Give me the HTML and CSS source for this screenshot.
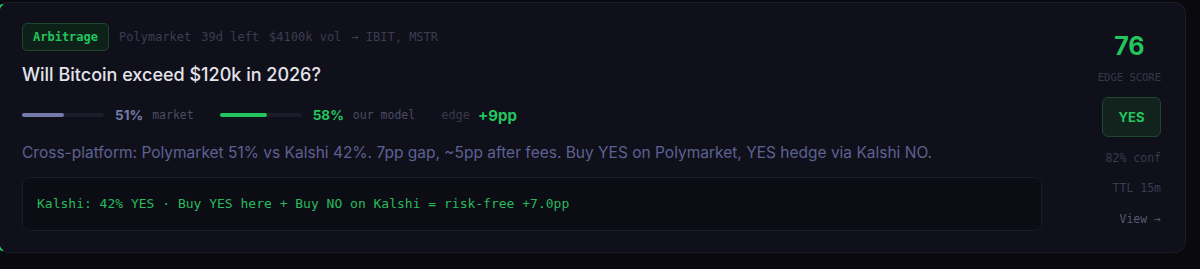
FILE: index.html
```html
<!DOCTYPE html>
<html lang="en">
<head>
  <meta charset="UTF-8">
  <meta name="viewport" content="width=device-width, initial-scale=1.0">
  <title>Edge Signal</title>
  <link rel="stylesheet" href="styles.css">
</head>
<body>
  <div class="signal-card">
    <div class="signal-main">
      <div class="signal-meta">
        <span class="badge">Arbitrage</span>
        <span>Polymarket</span>
        <span>39d left</span>
        <span>$4100k vol</span>
        <span>&rarr; IBIT, MSTR</span>
      </div>
      <h2 class="signal-title">Will Bitcoin exceed $120k in 2026?</h2>
      <div class="prob-row">
        <div class="prob">
          <div class="bar"><div class="bar-fill market" style="width: 51%"></div></div>
          <span class="pct market">51%</span>
          <span class="prob-label">market</span>
        </div>
        <div class="prob">
          <div class="bar"><div class="bar-fill model" style="width: 58%"></div></div>
          <span class="pct model">58%</span>
          <span class="prob-label">our model</span>
        </div>
        <div class="edge">
          <span class="edge-label">edge</span>
          <span class="edge-value">+9pp</span>
        </div>
      </div>
      <p class="signal-desc">Cross-platform: Polymarket 51% vs Kalshi 42%. 7pp gap, ~5pp after fees. Buy YES on Polymarket, YES hedge via Kalshi NO.</p>
      <div class="hedge-box">Kalshi: 42% YES &middot; Buy YES here + Buy NO on Kalshi = risk-free +7.0pp</div>
    </div>
    <div class="signal-side">
      <div class="score">
        <div class="score-value">76</div>
        <div class="score-label">EDGE SCORE</div>
      </div>
      <div class="side-btn">YES</div>
      <div class="side-info">82% conf</div>
      <div class="side-info ttl">TTL 15m</div>
      <a class="side-link" href="#">View &rarr;</a>
    </div>
  </div>
</body>
</html>
```

FILE: styles.css
```css
body {
  margin: 0;
  padding: 2px 14px 0 0;
  background: #0a0a0e;
  font-family: Inter, "Noto Sans", sans-serif;
  overflow: hidden;
}
.signal-card {
  display: flex;
  gap: 55px;
  margin-left: -4px;
  padding: 20px 24px 21px 23px;
  background: #10101a;
  border: 1px solid #1b1c29;
  border-left: 3px solid #22c55e;
  border-radius: 12px;
}
.signal-main {
  flex: 1;
  min-width: 0;
}
.signal-meta {
  display: flex;
  align-items: center;
  gap: 10px;
  font-family: "DejaVu Sans Mono", monospace;
  font-size: 12px;
  color: #3b3d52;
}
.badge {
  padding: 6px 10px;
  line-height: 14px;
  background: #0e2118;
  border: 1px solid #1c4630;
  border-radius: 5px;
  color: #22c55e;
  font-weight: bold;
}
.signal-title {
  margin: 13px 0 0;
  font-size: 18px;
  line-height: 22px;
  font-weight: 500;
  color: #e3e3ec;
}
.prob-row {
  display: flex;
  align-items: center;
  height: 20px;
  margin-top: 19px;
}
.prob {
  display: flex;
  align-items: center;
  margin-right: 26px;
}
.bar {
  width: 82px;
  height: 4px;
  background: #1c1d2b;
  border-radius: 2px;
  margin-right: 11px;
}
.bar-fill {
  height: 100%;
  border-radius: 2px;
}
.bar-fill.market {
  background: #747aa9;
}
.bar-fill.model {
  background: #22c55e;
}
.pct {
  font-size: 13.5px;
  font-weight: 700;
  margin-right: 9px;
}
.pct.market {
  color: #747aa9;
}
.pct.model {
  color: #22c55e;
}
.prob-label {
  font-family: "DejaVu Sans Mono", monospace;
  font-size: 11.5px;
  color: #4a4c62;
}
.edge {
  display: flex;
  align-items: center;
  gap: 8px;
}
.edge-label {
  font-family: "DejaVu Sans Mono", monospace;
  font-size: 12px;
  color: #36384b;
}
.edge-value {
  font-size: 15px;
  font-weight: 700;
  color: #22c55e;
}
.signal-desc {
  margin: 17px 0 0;
  font-size: 15.5px;
  line-height: 22px;
  color: #5d6192;
}
.hedge-box {
  margin-top: 13px;
  padding: 18px 14px;
  line-height: 16px;
  background: #0c0c15;
  border: 1px solid #1a1c29;
  border-radius: 8px;
  font-family: "DejaVu Sans Mono", monospace;
  font-size: 13px;
  color: #28bb5c;
}
.signal-side {
  display: flex;
  flex-direction: column;
  align-items: flex-end;
  width: 64px;
  font-family: "DejaVu Sans Mono", monospace;
}
.score {
  text-align: center;
  margin-top: 8px;
}
.score-value {
  font-family: Inter, sans-serif;
  font-size: 25px;
  line-height: 30px;
  font-weight: 700;
  color: #22c55e;
}
.score-label {
  margin-top: 10px;
  font-size: 10.5px;
  line-height: 13px;
  color: #363849;
}
.side-btn {
  margin-top: 13px;
  width: 57px;
  height: 38px;
  display: flex;
  align-items: center;
  justify-content: center;
  background: #11231c;
  border: 1px solid #1e4633;
  border-radius: 6px;
  color: #22c55e;
  font-family: Inter, sans-serif;
  font-size: 13px;
  font-weight: 700;
}
.side-info {
  margin-top: 14px;
  font-size: 11.5px;
  line-height: 14px;
  color: #393b4f;
}
.side-info.ttl {
  margin-top: 16px;
}
.side-link {
  margin-top: 17px;
  font-size: 11.5px;
  line-height: 14px;
  color: #585a6e;
  text-decoration: none;
}
```
